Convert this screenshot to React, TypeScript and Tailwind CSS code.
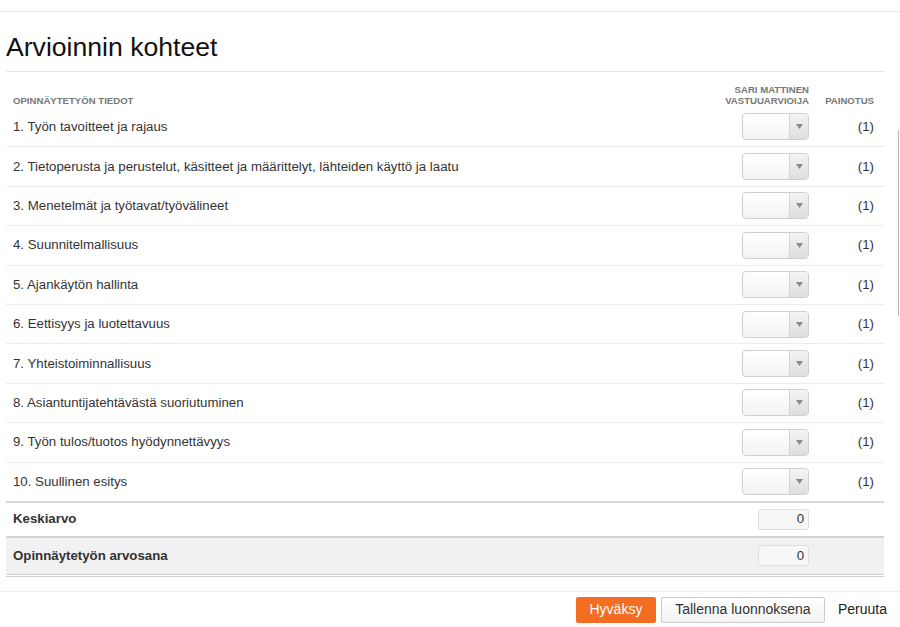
import React from "react";

const criteria = [
  "1. Työn tavoitteet ja rajaus",
  "2. Tietoperusta ja perustelut, käsitteet ja määrittelyt, lähteiden käyttö ja laatu",
  "3. Menetelmät ja työtavat/työvälineet",
  "4. Suunnitelmallisuus",
  "5. Ajankäytön hallinta",
  "6. Eettisyys ja luotettavuus",
  "7. Yhteistoiminnallisuus",
  "8. Asiantuntijatehtävästä suoriutuminen",
  "9. Työn tulos/tuotos hyödynnettävyys",
  "10. Suullinen esitys",
];

function GradeSelect() {
  return (
    <div className="flex h-[27px] w-[67px] overflow-hidden rounded-[4px] border border-[#cfcfcf] bg-gradient-to-b from-white to-[#f3f3f3]">
      <div className="flex-1" />
      <div className="flex w-[19px] items-center justify-center border-l border-[#d4d4d4] bg-gradient-to-b from-[#f4f4f4] to-[#dedede]">
        <svg width="7" height="5" viewBox="0 0 7 5">
          <path d="M0 0h7L3.5 5z" fill="#8a8a8a" />
        </svg>
      </div>
    </div>
  );
}

function ValueBox() {
  return (
    <div className="flex h-[21px] w-[51px] items-center justify-end rounded-[3px] border border-[#dedede] bg-[#f7f7f7] pr-[4px] text-[13.25px] font-normal text-[#333]">
      0
    </div>
  );
}

export default function App() {
  return (
    <div
      className="relative h-[627px] w-[900px] overflow-hidden bg-white text-[#333]"
      style={{ fontFamily: '"Liberation Sans", Arial, sans-serif' }}
    >
      <div className="absolute right-[1px] top-[130px] h-[186px] w-px bg-[#b9b9b9]" />
      <div className="h-[12px] border-b border-[#eaeaea]" />
      <div className="px-[6px] pr-[16px]">
        <h1 className="flex h-[59px] items-center pt-[11px] text-[26.6px] leading-none text-[#111]">
          Arvioinnin kohteet
        </h1>
        <div className="border-t border-[#e4e4e4]" />

        <div className="flex h-[35px] items-end pb-[1px] text-[9.6px] font-bold leading-[11px] text-[#777]">
          <div className="flex-1 pl-[7px]">OPINNÄYTETYÖN TIEDOT</div>
          <div className="w-[90px] text-right">
            SARI MATTINEN
            <br />
            VASTUUARVIOIJA
          </div>
          <div className="w-[75px] pr-[10px] text-right">PAINOTUS</div>
        </div>

        {criteria.map((c, i) => (
          <div
            key={c}
            className={`flex h-[39.4px] items-center text-[13.25px] ${i > 0 ? "border-t border-[#ececec]" : ""}`}
          >
            <div className="flex-1 pl-[7px]">{c}</div>
            <div className="flex w-[90px] justify-end">
              <GradeSelect />
            </div>
            <div className="w-[75px] pr-[10px] text-right">(1)</div>
          </div>
        ))}

        <div className="flex h-[35px] items-center border-t-2 border-[#d8d8d8] text-[13.25px] font-bold">
          <div className="flex-1 pl-[7px]">Keskiarvo</div>
          <div className="flex w-[90px] justify-end">
            <ValueBox />
          </div>
          <div className="w-[75px]" />
        </div>
        <div className="border-t border-[#d4d4d4]" />
        <div className="flex h-[37px] items-center border-t border-[#d4d4d4] bg-[#f1f1f1] text-[13.25px] font-bold">
          <div className="flex-1 pl-[7px]">Opinnäytetyön arvosana</div>
          <div className="flex w-[90px] justify-end">
            <ValueBox />
          </div>
          <div className="w-[75px]" />
        </div>
        <div className="h-[3px] border-y border-[#cfcfcf]" />
      </div>

      <div className="mt-[14px] flex h-[36px] items-start justify-end gap-[5px] border-t border-[#ececec] pr-[13px] pt-[5px] text-[14px]">
        <button className="h-[26px] w-[80px] rounded-[2px] bg-[#f36d22] text-white">Hyväksy</button>
        <button className="h-[26px] w-[164px] rounded-[2px] border border-[#cccccc] bg-gradient-to-b from-white to-[#f3f3f3] text-[#333]">
          Tallenna luonnoksena
        </button>
        <button className="ml-[8px] h-[26px] text-[#222]">Peruuta</button>
      </div>
    </div>
  );
}
